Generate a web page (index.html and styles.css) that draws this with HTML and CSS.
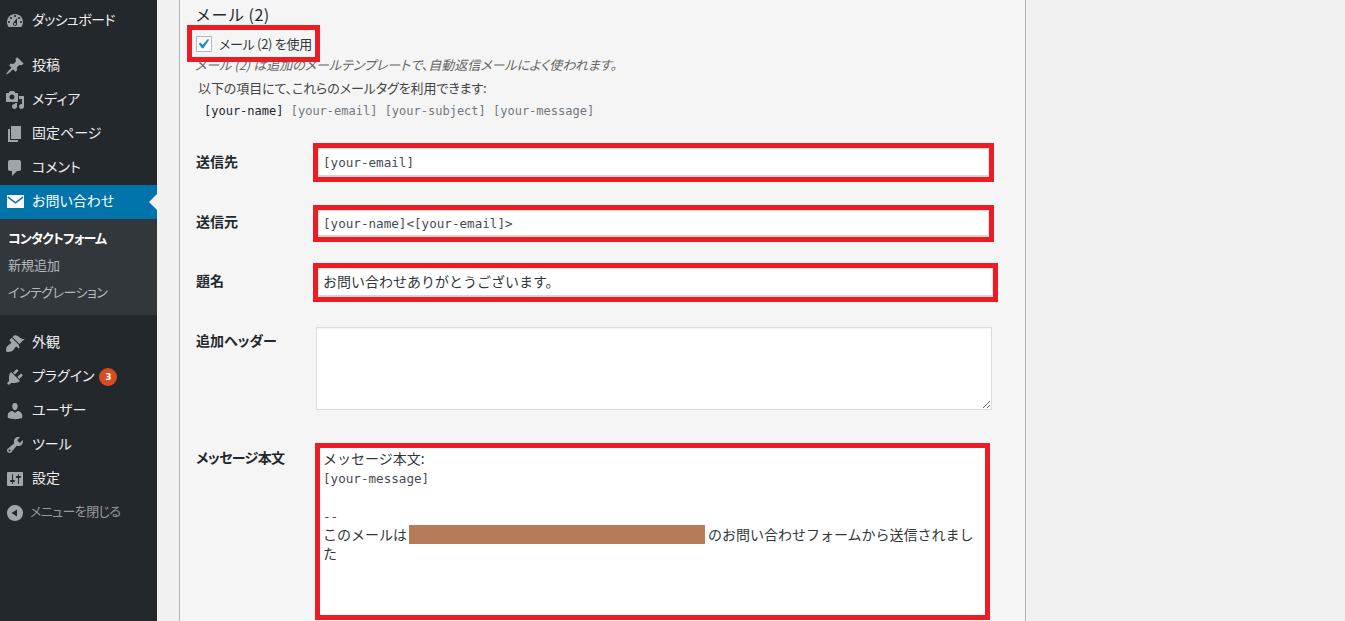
FILE: index.html
```html
<!DOCTYPE html>
<html lang="ja">
<head>
<meta charset="utf-8">
<title>コンタクトフォーム</title>
<link rel="stylesheet" href="styles.css">
</head>
<body>
<div class="app">
  <nav class="sidebar">
    <ul class="menu">
      <li class="item"><svg class="icon" viewBox="0 0 20 20"><path d="M3.76 16h12.48c1.1-1.37 1.76-3.11 1.76-5 0-4.42-3.58-8-8-8s-8 3.58-8 8c0 1.89.66 3.63 1.76 5zM10 4c.55 0 1 .45 1 1s-.45 1-1 1-1-.45-1-1 .45-1 1-1zM6 6c.55 0 1 .45 1 1s-.45 1-1 1-1-.45-1-1 .45-1 1-1zm8 0c.55 0 1 .45 1 1s-.45 1-1 1-1-.45-1-1 .45-1 1-1zm-5.37 5.55L12 7v6c0 1.1-.9 2-2 2s-2-.9-2-2c0-.57.24-1.08.63-1.45zM4 10c.55 0 1 .45 1 1s-.45 1-1 1-1-.45-1-1 .45-1 1-1zm12 0c.55 0 1 .45 1 1s-.45 1-1 1-1-.45-1-1 .45-1 1-1zm-5 3c0-.55-.45-1-1-1s-1 .45-1 1 .45 1 1 1 1-.45 1-1z"/></svg><span class="tight">ダッシュボード</span></li>
      <li class="sep"></li>
      <li class="item"><svg class="icon" viewBox="0 0 20 20"><path d="M10.44 3.02l1.82-1.82 6.36 6.35-1.83 1.82c-1.05-.68-2.48-.57-3.41.36l-.75.75c-.92.93-1.04 2.35-.35 3.41l-1.83 1.82-2.41-2.41-2.8 2.79c-.42.42-3.38 2.71-3.8 2.29s1.86-3.39 2.28-3.81l2.79-2.79L4.1 9.36l1.83-1.82c1.05.69 2.48.57 3.4-.36l.75-.75c.93-.92 1.05-2.35.36-3.41z"/></svg><span>投稿</span></li>
      <li class="item"><svg class="icon" viewBox="0 0 20 20"><path d="M13 11V4c0-.55-.45-1-1-1h-1.67L9 1H5L3.67 3H2c-.55 0-1 .45-1 1v7c0 .55.45 1 1 1h10c.55 0 1-.45 1-1zM7 4.5c1.38 0 2.5 1.12 2.5 2.5S8.38 9.5 7 9.5 4.5 8.38 4.5 7 5.62 4.5 7 4.5zM14 6h5v10.5c0 1.38-1.12 2.5-2.5 2.5S14 17.88 14 16.5s1.12-2.5 2.5-2.5c.17 0 .34.02.5.05V9h-3V6zm-4 8.05V13h2v3.5c0 1.38-1.12 2.5-2.5 2.5S7 17.88 7 16.5 8.12 14 9.5 14c.17 0 .34.02.5.05z"/></svg><span>メディア</span></li>
      <li class="item"><svg class="icon" viewBox="0 0 20 20"><path d="M6 15V2h10v13H6zm-1 1h8v2H3V5h2v11z"/></svg><span>固定ページ</span></li>
      <li class="item"><svg class="icon" viewBox="0 0 20 20"><path d="M5 2h9c1.1 0 2 .9 2 2v7c0 1.1-.9 2-2 2h-2l-5 5v-5H5c-1.1 0-2-.9-2-2V4c0-1.1.9-2 2-2z"/></svg><span>コメント</span></li>
      <li class="item current"><svg class="icon" viewBox="0 0 20 20"><path d="M2 3h17v13H2z"/><path class="chevron" d="M3 5.200l7.500 5.600L18 5.200"/></svg><span>お問い合わせ</span></li>
      <li>
        <ul class="submenu">
          <li class="sub-item sub-current">コンタクトフォーム</li>
          <li class="sub-item">新規追加</li>
          <li class="sub-item sub-tight">インテグレーション</li>
        </ul>
      </li>
      <li class="sep-b"></li>
      <li class="item"><svg class="icon" viewBox="0 0 20 20"><path d="M14.48 11.06L7.41 3.99l1.5-1.5c.5-.56 2.3-.47 3.51.32 1.21.8 1.43 1.28 2.91 2.1 1.18.64 2.45 1.26 4.45.85zm-.71.71L6.7 4.7 4.93 6.47c-.39.39-.39 1.02 0 1.41l1.06 1.06c.39.39.39 1.03 0 1.42-.6.6-1.43 1.11-2.21 1.69-.35.26-.7.53-1.01.84C1.43 13.23.91 15.53 1.2 18.8c3.28.29 5.57-.23 6.92-1.58.31-.31.58-.66.84-1.01.58-.78 1.09-1.61 1.69-2.21.39-.39 1.03-.39 1.42 0l1.06 1.06c.39.39 1.02.39 1.41 0z"/></svg><span>外観</span></li>
      <li class="item"><svg class="icon" viewBox="0 0 20 20"><path d="M13.11 4.36L9.87 7.6 8 5.73l3.24-3.24c.35-.34 1.05-.2 1.56.32.52.51.66 1.21.31 1.55zm-8 1.77l.91-1.12 9.01 9.01-1.19.84c-.71.71-2.63 1.16-3.82 1.16H6.14L4.9 17.26c-.59.59-1.54.59-2.12 0-.59-.58-.59-1.53 0-2.12l1.24-1.24v-3.88c0-1.13.4-3.19 1.09-3.89zm7.26 3.97l3.24-3.24c.34-.35 1.04-.21 1.55.31.52.51.66 1.21.31 1.55l-3.24 3.25z"/></svg><span>プラグイン</span><b class="badge">3</b></li>
      <li class="item"><svg class="icon" viewBox="0 0 20 20"><path d="M10 9.25c-2.27 0-2.73-3.44-2.73-3.44C7 4.02 7.82 2 9.97 2c2.16 0 2.98 2.02 2.71 3.81 0 0-.41 3.44-2.68 3.44zm0 2.57L12.72 10c2.39 0 4.52 2.33 4.52 4.53v2.49s-3.65 1.13-7.24 1.13c-3.65 0-7.24-1.13-7.24-1.13v-2.49c0-2.25 1.94-4.48 4.47-4.48z"/></svg><span>ユーザー</span></li>
      <li class="item"><svg class="icon" viewBox="0 0 20 20"><path d="M16.68 9.77c-1.34 1.34-3.3 1.67-4.95.99l-5.41 6.52c-.99.99-2.59.99-3.58 0s-.99-2.59 0-3.57l6.52-5.42c-.68-1.65-.35-3.61.99-4.95 1.28-1.28 3.12-1.62 4.72-1.06l-2.89 2.89 2.82 2.82 2.86-2.87c.53 1.58.18 3.39-1.08 4.65zM3.81 16.21c.4.39 1.04.39 1.43 0 .4-.4.4-1.04 0-1.43-.39-.4-1.03-.4-1.43 0-.39.39-.39 1.03 0 1.43z"/></svg><span>ツール</span></li>
      <li class="item"><svg class="icon" viewBox="0 0 20 20"><path d="M18 16V4c0-.55-.45-1-1-1H3c-.55 0-1 .45-1 1v12c0 .55.45 1 1 1h14c.55 0 1-.45 1-1zM8 11h1c.55 0 1 .45 1 1s-.45 1-1 1H8v1.5c0 .28-.22.5-.5.5s-.5-.22-.5-.5V13H6c-.55 0-1-.45-1-1s.45-1 1-1h1V5.500c0-.28.22-.5.5-.5s.5.22.5.5V11zm5-2h-1c-.55 0-1-.45-1-1s.45-1 1-1h1V5.500c0-.28.22-.5.5-.5s.5.22.5.5V7h1c.55 0 1 .45 1 1s-.45 1-1 1h-1v5.500c0 .28-.22.5-.5.500s-.5-.22-.5-.5V9z"/></svg><span>設定</span></li>
      <li class="item collapse"><svg class="icon" viewBox="0 0 20 20"><path d="M18 10c0-4.420-3.580-8-8-8s-8 3.580-8 8 3.580 8 8 8 8-3.580 8-8zm-6 3.500L6.500 10 12 6.500v7z"/></svg><span>メニューを閉じる</span></li>
    </ul>
  </nav>

  <main class="main">
    <section class="panel">
      <h2 class="title">メール (2)</h2>
      <label class="use-mail"><span class="check"><svg viewBox="4 3 14 14"><path d="M14.830 4.890l1.340.94-5.810 8.380H9.020L5.780 9.670l1.340-1.250 2.570 2.400z"/></svg></span>メール (2) を使用</label>
      <p class="desc">メール (2) は追加のメールテンプレートで、自動返信メールによく使われます。</p>
      <p class="hint">以下の項目にて、これらのメールタグを利用できます:</p>
      <p class="tags"><span class="tag-on">[your-name]</span> [your-email] [your-subject] [your-message]</p>

      <div class="row row-to">
        <div class="label">送信先</div>
        <div class="mark"><div class="field mono">[your-email]</div></div>
      </div>
      <div class="row row-from">
        <div class="label">送信元</div>
        <div class="mark"><div class="field mono">[your-name]&lt;[your-email]&gt;</div></div>
      </div>
      <div class="row row-subject">
        <div class="label">題名</div>
        <div class="mark mark-wide"><div class="field">お問い合わせありがとうございます。</div></div>
      </div>
      <div class="row row-header">
        <div class="label">追加ヘッダー</div>
        <textarea class="headers" aria-label="追加ヘッダー"></textarea>
      </div>
      <div class="row row-body">
        <div class="label">メッセージ本文</div>
        <div class="mark mark-body">
          <div class="body-text">
            <div>メッセージ本文:</div>
            <div class="mono">[your-message]</div>
            <div class="blank"></div>
            <div class="mono">--</div>
            <div class="nowrap">このメールは<span class="redact"></span>のお問い合わせフォームから送信されまし</div>
            <div>た</div>
          </div>
        </div>
      </div>
    </section>
  </main>
</div>
</body>
</html>
```

FILE: styles.css
```css
* { box-sizing: border-box; }
html, body { margin: 0; height: 100%; overflow: hidden; }
body {
  background: #f1f1f1;
  color: #32373c;
  font-family: "Noto Sans CJK JP", "Noto Sans", sans-serif;
  font-size: 13px;
  font-feature-settings: "palt";
}
ul { list-style: none; margin: 0; padding: 0; }
p, h2 { margin: 0; }
.app { display: flex; height: 100vh; }

/* sidebar */
.sidebar { width: 157px; flex: none; background: #23282d; padding-top: 4px; }
.item {
  position: relative;
  display: flex;
  align-items: center;
  gap: 7px;
  height: 34px;
  padding-left: 5px;
  color: #eee;
  font-size: 14px;
  line-height: 18px;
}
.item span { padding-bottom: 4px; }
.tight { letter-spacing: -.6px; }
.icon { width: 20px; height: 20px; fill: #a0a5aa; flex: none; }
.sep { height: 11px; }
.sep-b { height: 11px; }
.current { background: #0073aa; color: #fff; }
.current .icon { fill: #fff; }
.current .chevron { fill: none; stroke: #0073aa; stroke-width: 1.500; }
.current::after {
  content: "";
  position: absolute;
  right: 0;
  top: 9px;
  border: 8px solid transparent;
  border-left: 0;
  border-right-color: #f1f1f1;
}
.submenu { background: #32373c; padding: 5px 0 10px; }
.sub-item { height: 27px; line-height: 27px; padding-left: 8px; font-size: 13px; color: #b4b9be; }
.sub-current { color: #fff; font-weight: 700; letter-spacing: -.8px; }
.sub-tight { letter-spacing: -.5px; }
.badge {
  width: 18px;
  height: 18px;
  margin-left: -2px;
  border-radius: 50%;
  background: #d54e21;
  color: #fff;
  font: 700 9px/18px "DejaVu Sans", sans-serif;
  text-align: center;
}
.collapse { gap: 5px; color: #999; font-size: 13px; letter-spacing: -.6px; }

/* main */
.main { flex: 1; padding-left: 22px; }
.panel {
  width: 847px;
  height: 100%;
  padding: 4px 0 0 15px;
  background: #f5f5f5;
  border: solid #b4b4b4;
  border-width: 0 1px;
}
.title {
  font-size: 16px;
  line-height: 21px;
  font-weight: 400;
  letter-spacing: .5px;
  color: #23282d;
  font-feature-settings: normal;
}
.use-mail {
  position: relative;
  display: flex;
  align-items: center;
  gap: 7px;
  width: 133px;
  height: 37px;
  margin-left: -8px;
  padding-left: 4px;
  border: 5px solid #ed1c24;
  font-size: 13px;
  letter-spacing: -.3px;
  white-space: nowrap;
}
.check {
  width: 16px;
  height: 16px;
  background: #fff;
  border: 1px solid #b4b9be;
  flex: none;
}
.check svg { display: block; width: 14px; height: 14px; fill: #1e8cbe; }
.desc { margin-top: -5px; font-size: 13px; line-height: 16px; font-style: italic; color: #666; }
.hint { margin: 7px 0 0 3px; font-size: 13px; line-height: 16px; letter-spacing: -.1px; color: #444; }
.tags {
  margin: 7px 0 0 9px;
  font: 12px/16px "DejaVu Sans Mono", monospace;
  color: #72777c;
}
.tag-on { color: #23282d; }

/* form rows */
.row { display: flex; align-items: flex-start; }
.row-to { margin-top: 24px; }
.row-from { margin-top: 23px; }
.row-subject { margin-top: 21px; }
.row-header { margin-top: 25px; }
.row-body { margin-top: 33px; }
.label {
  width: 118px;
  flex: none;
  padding-left: 1px;
  font-size: 14px;
  font-weight: 700;
  line-height: 20px;
  color: #23282d;
}
.row-to .label { padding-top: 8px; }
.row-subject .label { padding-top: 7px; }
.row-from .label { padding-top: 6px; }
.row-header .label { padding-top: 3px; }
.row-body .label { padding-top: 4px; letter-spacing: -.6px; }
.mark { width: 681px; border: 5px solid #ed1c24; }
.mark-wide { width: 685px; }
.field {
  height: 29px;
  padding: 0 4px;
  background: #fff;
  border: 1px solid #e2e2e2;
  border-bottom: 2px solid #d5d5d5;
  box-shadow: inset 0 1px 2px rgba(0, 0, 0, .05);
  font-size: 14px;
  line-height: 25px;
  font-feature-settings: normal;
}
.field.mono { line-height: 28px; }
.row-from .mark .field { height: 27px; line-height: 25px; }
.mono { font-family: "DejaVu Sans Mono", monospace; font-size: 12.600px; color: #454b52; }
.headers {
  display: block;
  width: 676px;
  height: 83px;
  margin: 0 0 0 3px;
  background: #fff;
  border: 1px solid #ddd;
  box-shadow: inset 0 1px 2px rgba(0, 0, 0, .05);
  outline: 0;
}
.mark-body { width: 675px; height: 177px; margin-left: 2px; background: #fff; }
.body-text { padding: 1px 4px 0 3px; font-size: 14px; line-height: 19px; font-feature-settings: normal; }
.body-text .mono { height: 19px; line-height: 21px; }
.blank { height: 19px; }
.nowrap { white-space: nowrap; }
.redact {
  display: inline-block;
  width: 296px;
  height: 19px;
  margin: 0 3px 0 2px;
  background: #b67b58;
  vertical-align: top;
}
```
